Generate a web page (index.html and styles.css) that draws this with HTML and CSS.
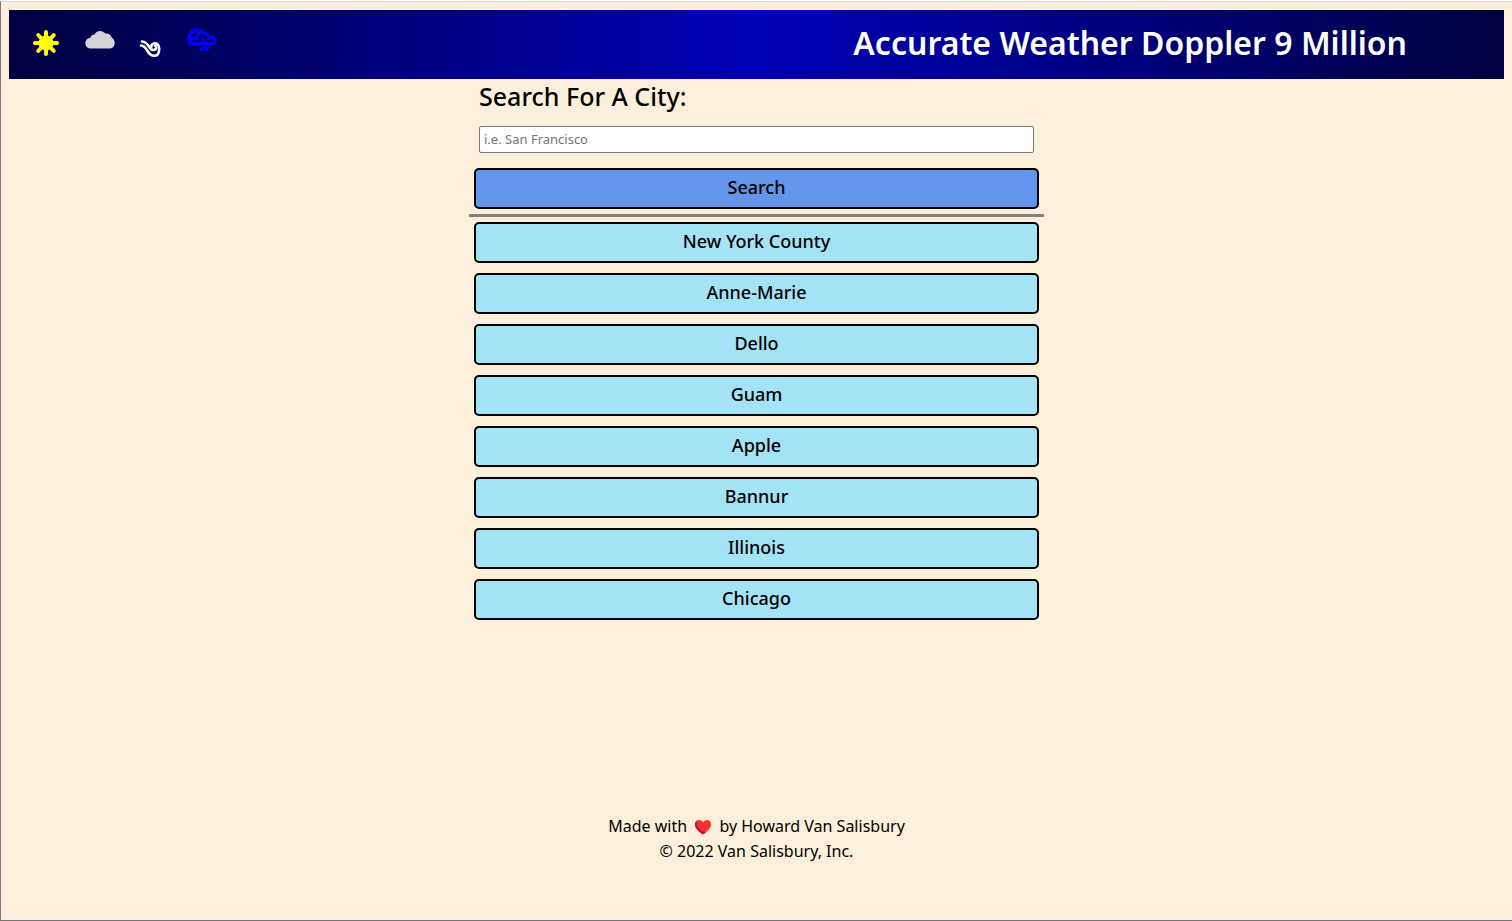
FILE: index.html
```html
<!DOCTYPE html>
<html lang="en">
<head>
<meta charset="utf-8">
<title>Accurate Weather Doppler 9 Million</title>
<link rel="stylesheet" href="styles.css">
</head>
<body>
<div class="page">
  <header class="banner">
    <div class="icons">
      <svg class="icon" viewBox="0 0 30 30" aria-hidden="true">
        <circle cx="15" cy="15" r="7.6" fill="#ff0"/>
        <path d="M15 4v22M4 15h22M7.2 7.2l15.6 15.6M22.8 7.2L7.2 22.8" stroke="#ff0" stroke-width="4" stroke-linecap="round"/>
      </svg>
      <svg class="icon" viewBox="0 0 30 30" aria-hidden="true">
        <path d="M5.500 20.500C2 20.500 .4 18 .4 15.300c0-3 2-5.300 5-5.500C6 7.500 7.600 6.600 9.500 6.600 10.500 4.200 12.500 3 15 3c2.300 0 4.200 1 5.200 2.500 3.500-.5 6.300 1.500 6.600 4.300 1.700 .9 2.900 2.900 2.900 5 0 3.500-2 5.700-4.700 5.700z" fill="#d3d3d3"/>
      </svg>
      <svg class="icon icon-wind" viewBox="0 0 22 20" aria-hidden="true">
        <g fill="none" stroke="#fff" stroke-width="2.600" stroke-linecap="round">
          <path d="M3 2.500c4 .5 5.500 2.500 7 5 1.500 2.700 3.500 4.200 5.700 3.200 2.200-1 1.900-3.700 .2-4"/>
          <path d="M2 6.500c3.500 .2 4.700 2.500 6.500 5.500 2.100 3.500 4.300 5 7.300 4.800 4-.3 4.400-4.300 4.400-7.300 0-3.900-2.600-5.700-5.300-5-1.800 .5-2.800 2-2.700 3.800"/>
        </g>
      </svg>
      <svg class="icon icon-rain" viewBox="0 0 30 30" aria-hidden="true">
        <g fill="none" stroke="#00f" stroke-width="3" stroke-linecap="round" stroke-linejoin="round">
          <path d="M3 17.500H26.500C28.500 15.500 28 11.500 24.500 11.200c-1.300-.1-2.200 .2-3 1C21 8.500 18.500 6.800 15.500 6.800c-3 0-5 2-5.300 4.800"/>
          <path d="M3 17.500C1.800 14 2 9.500 4.500 7 7.500 4 11.500 3.800 14.500 6.500"/>
          <path d="M3.500 16c0-2.500 2-4 4-3.800 1.200 .1 2 .6 2.700 1.300"/>
          <path d="M2.300 12.500l-1.300 .2M2.800 9L1.500 8.300M4.800 6.200L3.900 5M7.600 4.500L7.200 3M10.800 4.200L11 2.700M14 5.200L14.800 4" stroke-width="2"/>
          <path d="M15.500 12.500c.3 1.300 1.500 1.700 2.800 1.400" stroke-width="2"/>
          <path d="M17.500 20.500l-1.300 1.500M15 23.500h-1.500M22.500 20.500L19 24" stroke-width="2.500"/>
        </g>
      </svg>
    </div>
    <h1 class="title">Accurate Weather Doppler 9 Million</h1>
  </header>
  <main class="panel">
    <form class="search">
      <label class="search-label" for="city">Search For A City:</label>
      <input class="search-input" id="city" type="text" placeholder="i.e. San Francisco">
      <button class="btn btn-search" type="submit">Search</button>
    </form>
    <div class="history">
      <button class="btn" type="button">New York County</button>
      <button class="btn" type="button">Anne-Marie</button>
      <button class="btn" type="button">Dello</button>
      <button class="btn" type="button">Guam</button>
      <button class="btn" type="button">Apple</button>
      <button class="btn" type="button">Bannur</button>
      <button class="btn" type="button">Illinois</button>
      <button class="btn" type="button">Chicago</button>
    </div>
  </main>
  <footer class="footer">
    <p class="footer-line">Made with
      <svg class="heart" viewBox="0 0 18 16" role="img" aria-label="love">
        <path d="M9 15.500C4 12 1 9 1 5.300 1 2.700 2.800 1 5 1c1.800 0 3.200 .9 4 2.500C9.800 1.900 11.200 1 13 1c2.200 0 4 1.700 4 4.300 0 3.700-3 6.700-8 10.200z" fill="#f8312f"/>
        <path d="M9 15.500C4 12 1 9 1 5.300 1 3.700 1.700 2.400 2.700 1.700 2 7 5 11 11.500 13.500 10.700 14.200 9.900 14.900 9 15.500z" fill="#ca0b4a"/>
      </svg>
      by Howard Van Salisbury</p>
    <p class="footer-line">© 2022 Van Salisbury, Inc.</p>
  </footer>
</div>
</body>
</html>
```
FILE: styles.css
```css
* {
  box-sizing: border-box;
}

html {
  background: #fff;
}

body {
  margin: 0;
  padding-top: 1px;
  font-family: "Noto Sans", "Open Sans", sans-serif;
  color: #000;
}

.page {
  display: flex;
  flex-direction: column;
  min-height: calc(100vh - 1px);
  padding: 8px 8px 0;
  background: #fcf0dc;
  border-top: 1px solid #dcdcdc;
  border-left: 1px solid #76767a;
  border-bottom: 1px solid #76767a;
}

.banner {
  display: flex;
  align-items: center;
  justify-content: space-between;
  padding: 9px 97px 12px 22px;
  background: linear-gradient(to right, #000040, #0000b8, #000040);
}

.icons {
  display: flex;
  align-items: center;
  gap: 24px;
}

.icon {
  width: 30px;
  height: 30px;
}

.icon-wind {
  width: 22px;
  height: 20px;
  margin-top: 12px;
}

.icon-rain {
  margin: 0 0 4px 2px;
}

.title {
  margin: 0;
  font-size: 32px;
  line-height: 48px;
  font-weight: 600;
  color: #fff;
}

.panel {
  width: 575px;
  max-width: 100%;
  margin: 0 auto;
}

.search {
  display: flex;
  flex-direction: column;
  border-bottom: 3px solid #808080;
}

.search-label {
  margin: 0 10px;
  font-size: 25px;
  line-height: 34px;
  font-weight: 500;
}

.search-input {
  height: 27px;
  margin: 13px 10px 10px;
  padding: 0 4px 2px;
  border: 1px solid #767676;
  border-radius: 2px;
  background: #fff;
  font-family: inherit;
  font-size: 13px;
}

.search-input::placeholder {
  color: #757575;
}

.history {
  display: flex;
  flex-direction: column;
}

.btn {
  height: 41px;
  margin: 5px;
  padding: 0 0 3px;
  border: 2px solid #000;
  border-radius: 5px;
  background: #a4e3f6;
  font-family: inherit;
  font-size: 18px;
  font-weight: 500;
  color: #000;
}

.btn-search {
  background: #6495ed;
}

.footer {
  margin-top: auto;
  padding-bottom: 56px;
  text-align: center;
}

.footer-line {
  margin: 0;
  font-size: 16px;
  line-height: 25px;
}

.heart {
  width: 18px;
  height: 16px;
  margin: 0 3px;
  vertical-align: -3px;
}
```
